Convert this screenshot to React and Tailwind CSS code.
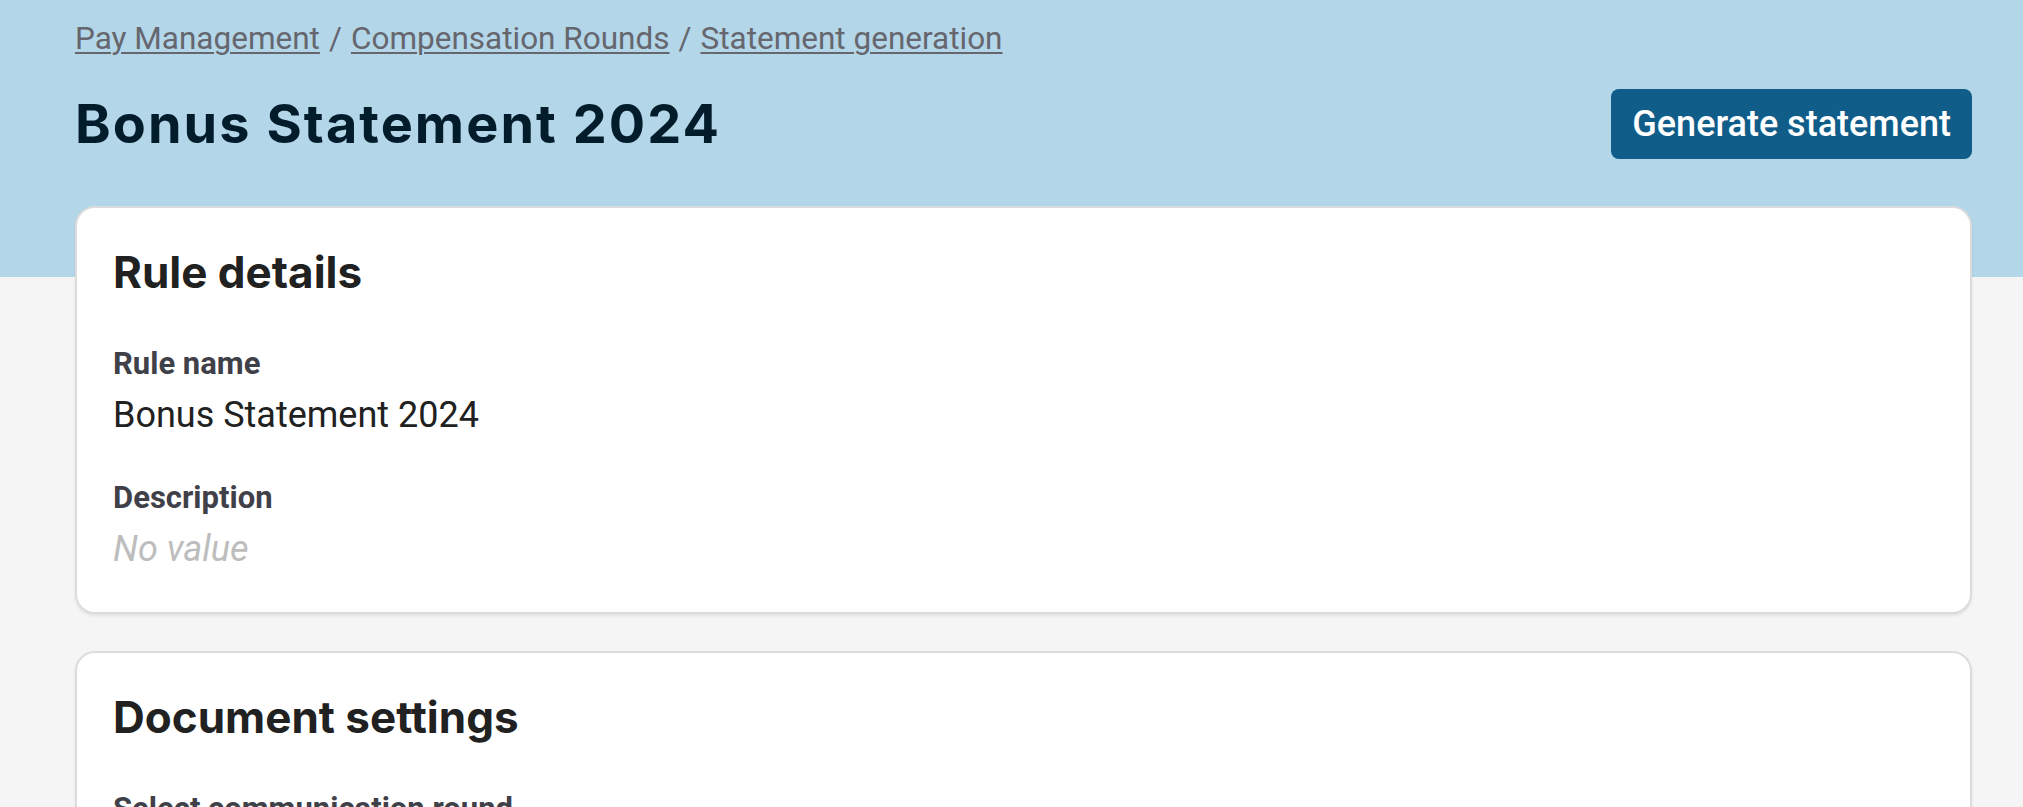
import React from "react";

const heading = { fontFamily: "Inter, 'Open Sans', sans-serif" };

function Field({ label, value, muted }) {
  return (
    <div className="flex flex-col gap-[11px]">
      <div className="text-[31px] leading-[36px] font-bold text-[#404048]">{label}</div>
      {muted ? (
        <div className="text-[36px] leading-[44px] italic text-[#bdbdbd]">{value}</div>
      ) : (
        <div className="text-[36px] leading-[44px] text-[#212121]">{value}</div>
      )}
    </div>
  );
}

export default function App() {
  return (
    <div
      className="min-h-[807px] bg-[linear-gradient(to_bottom,#b3d6e9_277px,#f5f5f5_277px)] pl-[75px] pr-[51px] pt-[19px] pb-10"
      style={{ fontFamily: "Roboto, 'Liberation Sans', sans-serif" }}
    >
      <nav className="text-[31.5px] leading-[40px] text-[#66666e]">
        <a className="underline decoration-2 underline-offset-[3px]">Pay Management</a>
        <span className="mx-[9px]">/</span>
        <a className="underline decoration-2 underline-offset-[3px]">Compensation Rounds</a>
        <span className="mx-[9px]">/</span>
        <a className="underline decoration-2 underline-offset-[3px]">Statement generation</a>
      </nav>

      <div className="mt-[30px] flex items-center justify-between">
        <h1
          className="text-[54px] leading-[60px] font-bold tracking-[0.038em] text-[#031c2b]"
          style={heading}
        >
          Bonus Statement 2024
        </h1>
        <button className="h-[70px] rounded-lg bg-[#105d89] px-[21px] text-[36px] font-medium text-white">
          Generate statement
        </button>
      </div>

      <div className="mt-[47px] flex flex-col gap-[37px]">
        <section className="rounded-[20px] border-2 border-[#dcdcdc] bg-white px-[36px] pt-[38px] pb-[41px] shadow-[0_2px_3px_rgba(0,0,0,0.08)]">
          <h2 className="text-[44px] leading-[53px] font-bold text-[#212121]" style={heading}>
            Rule details
          </h2>
          <div className="mt-[47px] flex flex-col gap-[43px]">
            <Field label="Rule name" value="Bonus Statement 2024" />
            <Field label="Description" value="No value" muted />
          </div>
        </section>

        <section className="rounded-[20px] border-2 border-[#dcdcdc] bg-white px-[36px] pt-[38px] pb-[41px] shadow-[0_2px_3px_rgba(0,0,0,0.08)]">
          <h2 className="text-[44px] leading-[53px] font-bold text-[#212121]" style={heading}>
            Document settings
          </h2>
          <div className="mt-[47px] flex flex-col gap-[43px]">
            <Field label="Select communication round" value="Bonus Round 2024" />
            <Field label="Template" value="Standard bonus template" />
          </div>
        </section>
      </div>
    </div>
  );
}
